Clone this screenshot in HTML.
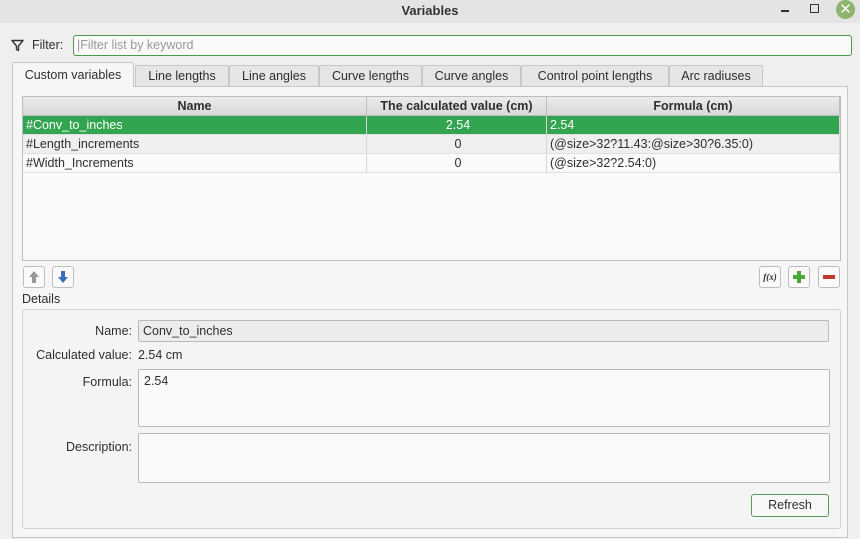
<!DOCTYPE html>
<html><head><style>
*{box-sizing:border-box;margin:0;padding:0}
body{width:860px;height:539px;background:#efefef;font-family:"Liberation Sans",sans-serif;font-size:12.5px;color:#2e2e2e;position:relative;overflow:hidden}
.a{position:absolute}
.title{left:0;top:0;width:860px;height:23px;background:#e4e4e4;text-align:center;line-height:22px;font-weight:bold;font-size:13px;color:#333}
.tab{position:absolute;top:65px;height:21px;border:1px solid #c8c8c8;border-bottom:none;background:#e6e6e6;text-align:center;line-height:20px;border-radius:2px 2px 0 0}
.tab.s{top:62px;height:25px;background:#f6f6f6;line-height:24px}
.cell{position:absolute;height:19px;line-height:18px;border-right:1px solid #d6d6d6;border-bottom:1px solid #e0e0e0;padding-left:3px;white-space:nowrap}
.hd{position:absolute;top:97px;height:19px;line-height:18px;background:linear-gradient(#ececec,#d8d8d8);border-right:1px solid #bdbdbd;border-bottom:1px solid #bdbdbd;text-align:center;font-weight:bold}
.btn{position:absolute;width:22px;height:22px;border:1px solid #bdbdbd;border-radius:3px;background:#fafafa}
.inp{position:absolute;border:1px solid #b9b9b9;border-radius:2px;background:#fafafa}
.lbl{position:absolute;text-align:right;width:132px;left:0}
</style></head><body>
<div class="a title">Variables</div>
<div class="a" style="left:781px;top:10px;width:8px;height:2px;background:#333"></div>
<div class="a" style="left:810px;top:4px;width:9px;height:9px;border:1.5px solid #333"></div>
<div class="a" style="left:836px;top:0;width:19px;height:19px;border-radius:50%;background:#8db36d;color:#fff;text-align:center;line-height:19px;font-size:15px">✕</div>

<svg class="a" style="left:11px;top:39px" width="13" height="13" viewBox="0 0 13 13"><path d="M1 1.5H12L7.5 7V11.5L5.5 10.5V7Z" fill="none" stroke="#333" stroke-width="1.4" stroke-linejoin="round"/></svg>
<div class="a" style="left:32px;top:38px">Filter:</div>
<div class="inp" style="left:73px;top:35px;width:779px;height:21px;border-color:#4a9a4a;border-radius:3px;padding-left:3px;line-height:19px;color:#999">|Filter list by keyword</div>

<div class="a" style="left:12px;top:86px;width:836px;height:452px;border:1px solid #c8c8c8;background:#f6f6f6"></div>
<div class="tab s" style="left:12px;width:122px">Custom variables</div>
<div class="tab" style="left:135px;width:94px">Line lengths</div>
<div class="tab" style="left:229px;width:90px">Line angles</div>
<div class="tab" style="left:319px;width:103px">Curve lengths</div>
<div class="tab" style="left:422px;width:99px">Curve angles</div>
<div class="tab" style="left:521px;width:148px">Control point lengths</div>
<div class="tab" style="left:669px;width:94px">Arc radiuses</div>

<div class="a" style="left:22px;top:96px;width:819px;height:165px;border:1px solid #bdbdbd;background:#fafafa"></div>
<div class="hd" style="left:23px;width:344px">Name</div>
<div class="hd" style="left:367px;width:180px">The calculated value (cm)</div>
<div class="hd" style="left:547px;width:293px">Formula (cm)</div>
<div class="a" style="left:23px;top:116px;width:817px;height:19px;background:#33a550"></div>
<div class="cell" style="left:23px;top:116px;width:344px;color:#fff">#Conv_to_inches</div>
<div class="cell" style="left:367px;top:116px;width:180px;color:#fff;text-align:center">2.54</div>
<div class="cell" style="left:547px;top:116px;width:293px;color:#fff">2.54</div>
<div class="a" style="left:23px;top:135px;width:817px;height:18px;background:#efefef"></div>
<div class="cell" style="left:23px;top:135px;width:344px">#Length_increments</div>
<div class="cell" style="left:367px;top:135px;width:180px;text-align:center">0</div>
<div class="cell" style="left:547px;top:135px;width:293px">(@size&gt;32?11.43:@size&gt;30?6.35:0)</div>
<div class="cell" style="left:23px;top:154px;width:344px">#Width_Increments</div>
<div class="cell" style="left:367px;top:154px;width:180px;text-align:center">0</div>
<div class="cell" style="left:547px;top:154px;width:293px">(@size&gt;32?2.54:0)</div>

<div class="btn" style="left:23px;top:266px"><svg width="20" height="20"><path d="M10 4L5 10H8V16H12V10H15Z" fill="#999"/></svg></div>
<div class="btn" style="left:52px;top:266px"><svg width="20" height="20"><path d="M10 16L5 10H8V4H12V10H15Z" fill="#3a6cb5"/></svg></div>
<div class="btn" style="left:759px;top:266px;font-size:9px;font-style:italic;font-family:'Liberation Serif',serif;text-align:center;line-height:20px;font-weight:bold">f(x)</div>
<div class="btn" style="left:788px;top:266px"><svg width="20" height="20"><path d="M8 4H12V8H16V12H12V16H8V12H4V8H8Z" fill="#4aa83a"/></svg></div>
<div class="btn" style="left:818px;top:266px"><svg width="20" height="20"><rect x="4" y="8" width="12" height="4" fill="#c0392b"/></svg></div>

<div class="a" style="left:22px;top:292px">Details</div>
<div class="a" style="left:22px;top:309px;width:819px;height:220px;border:1px solid #d2d2d2;border-radius:3px;background:#f4f4f4"></div>
<div class="lbl" style="top:324px">Name:</div>
<div class="inp" style="left:138px;top:320px;width:691px;height:22px;background:#ececec;padding-left:4px;line-height:20px">Conv_to_inches</div>
<div class="lbl" style="top:348px">Calculated value:</div>
<div class="a" style="left:138px;top:348px">2.54 cm</div>
<div class="lbl" style="top:375px">Formula:</div>
<div class="inp" style="left:138px;top:369px;width:692px;height:58px;padding:4px 5px">2.54</div>
<div class="lbl" style="top:440px">Description:</div>
<div class="inp" style="left:138px;top:433px;width:692px;height:50px"></div>
<div class="a" style="left:751px;top:494px;width:78px;height:23px;border:1px solid #5a9a5a;border-radius:3px;background:#f8f8f8;text-align:center;line-height:21px">Refresh</div>
</body></html>
